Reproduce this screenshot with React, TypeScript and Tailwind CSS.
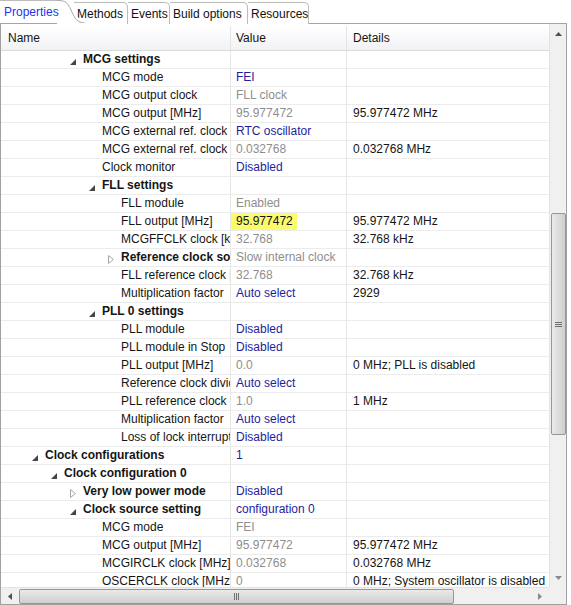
import React from 'react';

type Tone = 'blue' | 'gray';
type Expander = 'open' | 'closed' | null;

interface Row {
  level: number;
  label: string;
  bold?: boolean;
  exp?: Expander;
  value?: string;
  tone?: Tone;
  details?: string;
  highlight?: boolean;
}

const rows: Row[] = [
  { level: 2, label: 'MCG settings', bold: true, exp: 'open' },
  { level: 3, label: 'MCG mode', value: 'FEI', tone: 'blue' },
  { level: 3, label: 'MCG output clock', value: 'FLL clock', tone: 'gray' },
  { level: 3, label: 'MCG output [MHz]', value: '95.977472', tone: 'gray', details: '95.977472 MHz' },
  { level: 3, label: 'MCG external ref. clock source', value: 'RTC oscillator', tone: 'blue' },
  { level: 3, label: 'MCG external ref. clock [MHz]', value: '0.032768', tone: 'gray', details: '0.032768 MHz' },
  { level: 3, label: 'Clock monitor', value: 'Disabled', tone: 'blue' },
  { level: 3, label: 'FLL settings', bold: true, exp: 'open' },
  { level: 4, label: 'FLL module', value: 'Enabled', tone: 'gray' },
  { level: 4, label: 'FLL output [MHz]', value: '95.977472', details: '95.977472 MHz', highlight: true },
  { level: 4, label: 'MCGFFCLK clock [kHz]', value: '32.768', tone: 'gray', details: '32.768 kHz' },
  { level: 4, label: 'Reference clock source', bold: true, exp: 'closed', value: 'Slow internal clock', tone: 'gray' },
  { level: 4, label: 'FLL reference clock [kHz]', value: '32.768', tone: 'gray', details: '32.768 kHz' },
  { level: 4, label: 'Multiplication factor', value: 'Auto select', tone: 'blue', details: '2929' },
  { level: 3, label: 'PLL 0 settings', bold: true, exp: 'open' },
  { level: 4, label: 'PLL module', value: 'Disabled', tone: 'blue' },
  { level: 4, label: 'PLL module in Stop', value: 'Disabled', tone: 'blue' },
  { level: 4, label: 'PLL output [MHz]', value: '0.0', tone: 'gray', details: '0 MHz; PLL is disabled' },
  { level: 4, label: 'Reference clock divider', value: 'Auto select', tone: 'blue' },
  { level: 4, label: 'PLL reference clock [MHz]', value: '1.0', tone: 'gray', details: '1 MHz' },
  { level: 4, label: 'Multiplication factor', value: 'Auto select', tone: 'blue' },
  { level: 4, label: 'Loss of lock interrupt', value: 'Disabled', tone: 'blue' },
  { level: 0, label: 'Clock configurations', bold: true, exp: 'open', value: '1', tone: 'blue' },
  { level: 1, label: 'Clock configuration 0', bold: true, exp: 'open' },
  { level: 2, label: 'Very low power mode', bold: true, exp: 'closed', value: 'Disabled', tone: 'blue' },
  { level: 2, label: 'Clock source setting', bold: true, exp: 'open', value: 'configuration 0', tone: 'blue' },
  { level: 3, label: 'MCG mode', value: 'FEI', tone: 'gray' },
  { level: 3, label: 'MCG output [MHz]', value: '95.977472', tone: 'gray', details: '95.977472 MHz' },
  { level: 3, label: 'MCGIRCLK clock [MHz]', value: '0.032768', tone: 'gray', details: '0.032768 MHz' },
  { level: 3, label: 'OSCERCLK clock [MHz]', value: '0', tone: 'gray', details: '0 MHz; System oscillator is disabled when' },
];

const indentClass = ['pl-[44px]', 'pl-[63px]', 'pl-[82px]', 'pl-[101px]', 'pl-[120px]'];

const ExpanderIcon = ({ kind }: { kind: Expander }) => {
  if (kind === 'open') {
    return (
      <svg width="6" height="6" viewBox="0 0 6 6" className="absolute left-[-13px] top-[7px]">
        <polygon points="6,0 6,6 0,6" fill="#454545" />
      </svg>
    );
  }
  if (kind === 'closed') {
    return (
      <svg width="6" height="9" viewBox="0 0 6 9" className="absolute left-[-13px] top-[5px]">
        <polygon points="0.5,0.5 5.5,4.5 0.5,8.5" fill="none" stroke="#a6a6a6" strokeWidth="1" />
      </svg>
    );
  }
  return null;
};

const Tab = ({ label, width }: { label: string; width: string }) => (
  <div
    className={`h-[22px] pl-[3px] flex items-center border-t border-r border-[#bcbcbc] rounded-tr-[5px] text-[#111] bg-white whitespace-nowrap overflow-hidden ${width}`}
  >
    {label}
  </div>
);

export default function App() {
  return (
    <div className="w-[571px] h-[605px] bg-white overflow-hidden font-['Liberation_Sans',Arial,sans-serif] text-[12px] text-[#151515]">
      {/* tab strip */}
      <div className="relative h-[24px] flex items-end border-b border-[#a5a5a5] mr-[4px]">
        <div className="relative h-[23px] w-[60px] pl-[4px] flex items-center text-[#1f33ee] bg-white z-10 border-t border-[#bcbcbc]">
          Properties
          <svg width="28" height="24" viewBox="0 0 28 24" className="absolute left-[57px] top-[-1px]">
            <path d="M0 0.5 C 9 0.5, 10 2, 14 10 C 18 19, 20 22.5, 28 23" fill="white" stroke="#a8a8a8" strokeWidth="1" />
            <rect x="0" y="23" width="28" height="2" fill="white" />
          </svg>
        </div>
        <div className="flex items-end pl-[14px] mb-[-1px] h-[23px]">
          <Tab label="Methods" width="w-[54px]" />
          <Tab label="Events" width="w-[42px]" />
          <Tab label="Build options" width="w-[78px]" />
          <Tab label="Resources" width="w-[61px]" />
        </div>
      </div>

      {/* panel */}
      <div className="flex flex-col h-[581px] border-l border-r border-b border-[#a0a0a0] mr-[4px]">
        <div className="flex flex-1 min-h-0">
          <div className="flex-1 min-w-0 flex flex-col overflow-hidden">
            <div className="grid grid-cols-[230px_116px_201px] h-[25px] shrink-0 bg-gradient-to-b from-white to-[#f1f2f4] border-b border-[#d9dadc] mt-[2px]">
              <div className="pl-[7px] flex items-center border-r border-[#e3e4e6]">Name</div>
              <div className="pl-[5px] flex items-center border-r border-[#e3e4e6]">Value</div>
              <div className="pl-[6px] flex items-center">Details</div>
            </div>
            <div className="flex-1 overflow-hidden">
              {rows.map((r, i) => (
                <div key={i} className="grid grid-cols-[230px_116px_201px] h-[18px] border-b border-[#ececec]">
                  <div className={`relative border-r border-[#e6e6e6] overflow-hidden whitespace-nowrap leading-[17px] ${indentClass[r.level]}`}>
                    <span className={`relative ${r.bold ? 'font-bold' : ''}`}>
                      <ExpanderIcon kind={r.exp ?? null} />
                      {r.label}
                    </span>
                  </div>
                  <div className="border-r border-[#e6e6e6] overflow-hidden whitespace-nowrap leading-[17px]">
                    {r.value && (
                      <span
                        className={`inline-block pl-[5px] h-[17px] ${
                          r.highlight
                            ? 'bg-[#fbfb6e] text-[#151515] pr-[4px] w-[66px]'
                            : r.tone === 'blue'
                            ? 'text-[#1e1e9c]'
                            : 'text-[#8e8e8e]'
                        }`}
                      >
                        {r.value}
                      </span>
                    )}
                  </div>
                  <div className="pl-[6px] overflow-hidden whitespace-nowrap leading-[17px]">{r.details}</div>
                </div>
              ))}
            </div>
          </div>

          {/* vertical scrollbar */}
          <div className="w-[17px] shrink-0 bg-[#f0f0f0] border-l border-[#e3e3e3] flex flex-col items-center">
            <div className="h-[20px] w-full flex items-center justify-center">
              <svg width="7" height="4" viewBox="0 0 7 4"><polygon points="3.5,0 7,4 0,4" fill="#505050" /></svg>
            </div>
            <div className="h-[169px]" />
            <div className="w-[15px] h-[222px] rounded-[2px] border border-[#979797] bg-gradient-to-r from-[#eaeaea] via-[#dcdcdc] to-[#cfcfcf] flex items-center justify-center">
              <div className="flex flex-col gap-[1px]">
                <div className="w-[7px] h-[1px] bg-[#6e6e6e]" />
                <div className="w-[7px] h-[1px] bg-[#6e6e6e]" />
                <div className="w-[7px] h-[1px] bg-[#6e6e6e]" />
              </div>
            </div>
            <div className="flex-1" />
            <div className="h-[18px] w-full flex items-center justify-center">
              <svg width="7" height="4" viewBox="0 0 7 4"><polygon points="0,0 7,0 3.5,4" fill="#8a8a8a" /></svg>
            </div>
          </div>
        </div>

        {/* horizontal scrollbar */}
        <div className="h-[17px] shrink-0 flex">
          <div className="flex-1 bg-[#f0f0f0] border-t border-[#e3e3e3] flex items-center">
            <div className="w-[18px] flex items-center justify-center">
              <svg width="4" height="7" viewBox="0 0 4 7"><polygon points="4,0 4,7 0,3.5" fill="#505050" /></svg>
            </div>
            <div className="w-[435px] h-[15px] rounded-[2px] border border-[#979797] bg-gradient-to-b from-[#eaeaea] via-[#dcdcdc] to-[#cfcfcf] flex items-center justify-center">
              <div className="flex gap-[1px]">
                <div className="w-[1px] h-[7px] bg-[#6e6e6e]" />
                <div className="w-[1px] h-[7px] bg-[#6e6e6e]" />
                <div className="w-[1px] h-[7px] bg-[#6e6e6e]" />
              </div>
            </div>
            <div className="flex-1" />
            <div className="w-[18px] flex items-center justify-center">
              <svg width="4" height="7" viewBox="0 0 4 7"><polygon points="0,0 4,3.5 0,7" fill="#8a8a8a" /></svg>
            </div>
          </div>
          <div className="w-[17px] bg-[#f0f0f0]" />
        </div>
      </div>
    </div>
  );
}
